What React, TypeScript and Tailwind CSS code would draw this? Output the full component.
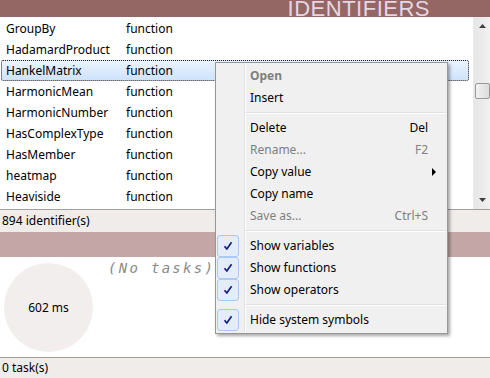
import React from "react";

const rows = [
  "GroupBy",
  "HadamardProduct",
  "HankelMatrix",
  "HarmonicMean",
  "HarmonicNumber",
  "HasComplexType",
  "HasMember",
  "heatmap",
  "Heaviside",
];

function Check() {
  return (
    <div className="w-[22px] h-[22px] rounded-[3px] border border-[#a9cbf2] bg-[#e3ecf8] flex items-center justify-center">
      <svg width="10" height="10" viewBox="0 0 10 10">
        <path d="M1.5 5.2 L3.8 8 L8.6 1.2" stroke="#14207f" strokeWidth="1.7" fill="none" strokeLinejoin="round" />
      </svg>
    </div>
  );
}

function Item({
  label,
  shortcut,
  disabled,
  bold,
  checked,
  arrow,
}: {
  label: string;
  shortcut?: string;
  disabled?: boolean;
  bold?: boolean;
  checked?: boolean;
  arrow?: boolean;
}) {
  return (
    <div className="relative flex h-[22px] items-center">
      <div className="w-[28px] pl-[1px] flex items-center">{checked ? <Check /> : null}</div>
      <div
        className={
          "flex-1 pl-[6px] " +
          (disabled ? "text-[#7f7f7f] " : "text-black ") +
          (bold ? "font-bold" : "")
        }
      >
        {label}
      </div>
      <div className={"w-[60px] text-right pr-[19px] " + (disabled ? "text-[#7f7f7f]" : "text-black")}>
        {shortcut}
      </div>
      {arrow ? (
        <svg className="absolute right-[10px] top-[7px]" width="5" height="8" viewBox="0 0 5 8">
          <path d="M0 0 L4 4 L0 8 Z" fill="#000" />
        </svg>
      ) : null}
    </div>
  );
}

function Sep() {
  return (
    <div className="h-[8px] flex items-center pl-[29px] pr-[1px]">
      <div className="flex-1 border-t border-[#e0e0e0] border-b border-b-white" />
    </div>
  );
}

export default function App() {
  return (
    <div
      className="relative w-[490px] h-[378px] overflow-hidden bg-white text-[12px] text-black"
      style={{ fontFamily: '"Noto Sans", "Segoe UI", sans-serif' }}
    >
      {/* Header */}
      <div className="h-[17px] bg-[#946664] flex justify-end items-end pr-[60px]">
        <div
          className="text-[22px] leading-[16px] tracking-[0.5px] text-[#e6d6e4]"
          style={{ fontFamily: '"Liberation Sans", Arial, sans-serif' }}
        >
          IDENTIFIERS
        </div>
      </div>

      {/* List */}
      <div className="h-[192px] flex">
        <div className="flex-1 pt-[1px]">
          {rows.map((r) => (
            <div
              key={r}
              className={
                "h-[21px] flex items-center ml-[1px] mr-[4px] " +
                (r === "HankelMatrix"
                  ? "border border-dotted border-[#202020] rounded-[2px] bg-gradient-to-b from-[#eaf3fe] to-[#cfe3fc]"
                  : "border border-transparent")
              }
            >
              <div className="w-[124px] pl-[4px]">{r}</div>
              <div>function</div>
            </div>
          ))}
        </div>
        <div className="w-[17px] bg-gradient-to-r from-[#e6e6e6] to-[#f1f1f1] border-l border-[#eaeaea] flex flex-col items-center relative">
          <div className="h-[18px] flex items-center justify-center">
            <svg width="7" height="4" viewBox="0 0 7 4">
              <path d="M0 4 L3.5 0 L7 4 Z" fill="#404040" />
            </svg>
          </div>
          <div className="mt-[48px] w-[15px] h-[16px] rounded-[2px] border border-[#9a9a9a] bg-gradient-to-r from-[#f2f2f2] to-[#dcdcdc]" />
          <div className="flex-1" />
          <div className="h-[18px] flex items-center justify-center">
            <svg width="7" height="4" viewBox="0 0 7 4">
              <path d="M0 0 L3.5 4 L7 0 Z" fill="#404040" />
            </svg>
          </div>
        </div>
      </div>

      {/* Status */}
      <div className="h-[23px] border-t border-[#a0a0a0] bg-[#f0ecea] flex items-center pl-[2px]">
        894 identifier(s)
      </div>

      {/* pink band */}
      <div className="h-[25px] bg-[#c4a6a6]" />

      {/* tasks area */}
      <div className="h-[100px] flex relative">
        <div className="w-[89px] h-[89px] rounded-full bg-[#f2eeee] ml-[4px] mt-[6px] flex items-center justify-center">
          602 ms
        </div>
        <div
          className="absolute left-[108px] top-[1px] italic text-[14px] text-[#8a8a8a] tracking-[2.3px]"
          style={{ fontFamily: '"DejaVu Sans Mono", monospace' }}
        >
          (No tasks)
        </div>
      </div>

      {/* bottom status */}
      <div className="h-[21px] border-t border-[#a0a0a0] bg-[#f0ecea] flex items-center pl-[2px]">
        0 task(s)
      </div>

      {/* Context menu */}
      <div className="absolute left-[215px] top-[62px] w-[233px] h-[272px] bg-[#f0f0f0] border border-[#979797] shadow-[2px_2px_3px_rgba(0,0,0,0.35)] pt-[2px]">
        <div className="absolute left-[28px] top-0 bottom-0 border-l border-[#e2e3e3] border-r border-r-white w-[2px]" />
        <div className="relative">
          <Item label="Open" disabled bold />
          <Item label="Insert" />
          <Sep />
          <Item label="Delete" shortcut="Del" />
          <Item label="Rename..." shortcut="F2" disabled />
          <Item label="Copy value" arrow />
          <Item label="Copy name" />
          <Item label="Save as..." shortcut="Ctrl+S" disabled />
          <Sep />
          <Item label="Show variables" checked />
          <Item label="Show functions" checked />
          <Item label="Show operators" checked />
          <Sep />
          <Item label="Hide system symbols" checked />
        </div>
      </div>
    </div>
  );
}
